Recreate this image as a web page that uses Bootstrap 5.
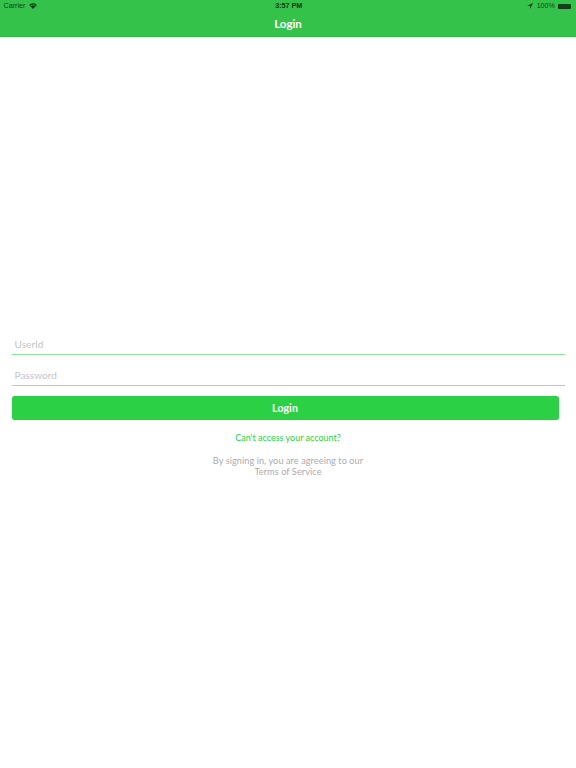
<!DOCTYPE html>
<html lang="en">
<head>
<meta charset="utf-8">
<title>Login</title>
<link href="https://cdn.jsdelivr.net/npm/bootstrap@5.3.0/dist/css/bootstrap.min.css" rel="stylesheet">
<style>
html,body{height:100%;background:#fff;}
body{font-family:Lato,"Open Sans",sans-serif;overflow:hidden;}
.app-head{background:#34c24b;height:37px;border-bottom:1px solid #30b646;}
.status-row{height:12px;font-family:"Liberation Sans",Arial,sans-serif;font-size:7.2px;line-height:12px;color:#123f1b;padding:0 5px 0 3.500px;}
.status-col{flex:1 1 0;}
.status-time{font-weight:700;color:#0f3516;padding-left:3px;font-size:7.200px;}
.head-title{color:#fff;font-size:11.500px;font-weight:700;line-height:24px;}
.batt{width:13px;height:5px;background:#123f1b;border-radius:1px;display:block;margin-left:-1px;}
.form-zone{padding:298px 11.500px 0 11.500px;}
.line-input.form-control{height:20px;padding:0 3px 2px;border:0;border-bottom:1px solid #90e59b;border-radius:0;font-size:10px;line-height:17px;background:transparent;box-shadow:none;color:#333;letter-spacing:.05px;}
.line-input.form-control::placeholder{color:#c4c4ca;opacity:1;}
.line-gap{margin-top:11px;}
.login-btn.btn{display:block;width:547px;height:24px;margin-top:10px;padding:0;background:#2cd044;border:0;border-radius:3px;color:#fff;font-size:10.500px;font-weight:700;line-height:24px;letter-spacing:.1px;box-shadow:0 0 1px #9fe8aa;}
.forgot{margin-top:13px;font-size:9px;line-height:10px;color:#2cd044;letter-spacing:0;}
.terms{margin-top:12px;font-size:9.200px;line-height:11px;color:#acacb0;letter-spacing:.06px;font-weight:400;}
</style>
</head>
<body>
<header class="app-head">
  <div class="status-row d-flex align-items-center">
    <div class="status-col d-flex align-items-center gap-1">
      <span>Carrier</span>
      <svg width="8" height="6" viewBox="0 0 18 14" aria-hidden="true"><path d="M9 14L0 4.500C5 -1 13 -1 18 4.500Z" fill="#123f1b"/><path d="M3.500 5.500C6.500 3 11.500 3 14.500 5.500L13.500 6.500C11 4.700 7 4.700 4.500 6.500Z" fill="#34c24b"/></svg>
    </div>
    <div class="status-time">3:57 PM</div>
    <div class="status-col d-flex align-items-center justify-content-end gap-1">
      <svg width="6" height="6" viewBox="0 0 10 10" aria-hidden="true"><path d="M10 0L0 4.500H5V10Z" fill="#123f1b"/></svg>
      <span>100%</span>
      <span class="batt"></span>
    </div>
  </div>
  <div class="head-title text-center">Login</div>
</header>
<main class="form-zone">
  <form>
    <input class="form-control line-input" type="text" placeholder="UserId">
    <input class="form-control line-input line-gap" type="password" placeholder="Password">
    <button class="btn login-btn" type="button">Login</button>
  </form>
  <div class="text-center forgot">Can't access your account?</div>
  <div class="text-center terms">By signing in, you are agreeing to our<br>Terms of Service</div>
</main>
<script src="https://cdn.jsdelivr.net/npm/bootstrap@5.3.0/dist/js/bootstrap.bundle.min.js"></script>
</body>
</html>
